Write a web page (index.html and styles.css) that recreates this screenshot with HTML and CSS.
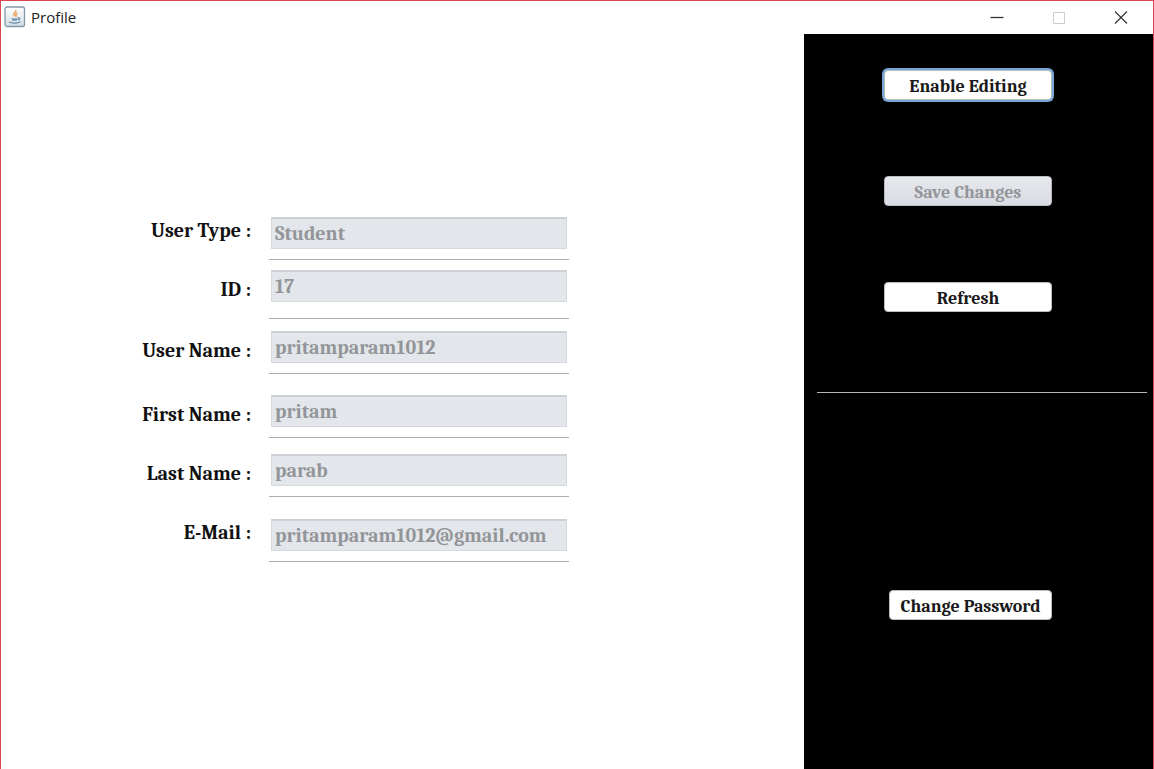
FILE: index.html
```html
<!DOCTYPE html>
<html lang="en">
<head>
<meta charset="utf-8">
<meta name="viewport" content="width=device-width, initial-scale=1">
<title>Profile</title>
<link rel="stylesheet" href="styles.css">
</head>
<body>
<div class="window">
  <header class="titlebar">
    <svg class="app-icon" viewBox="0 0 22 22" aria-hidden="true">
      <defs><linearGradient id="tile" x1="0" y1="0" x2="0" y2="1"><stop offset="0" stop-color="#fff"/><stop offset="1" stop-color="#d3dce2"/></linearGradient></defs>
      <rect x="1" y="1" width="19.500" height="19.500" rx="2" fill="url(#tile)" stroke="#8399a8" stroke-width="1.300"/>
      <path d="M11.800 4c1.200 2-2.800 3-1.800 4.800.3.700.9 1 1 1.700M13.500 6.800c-1.600.7-2.300 1.400-1.400 2.400.4.600.2 1-.3 1.400" fill="none" stroke="#e9984f" stroke-width="1.300"/>
      <path d="M7.500 11.800c1.500.8 4.500.8 6.300 0l-.8 2.600c-1.300.6-3.200.6-4.600 0z" fill="#6f95b0"/>
      <path d="M14 12c2.300-.5 2.100 1.500.1 2M5 16c3 1.500 8.500 1.500 11.500-.2" fill="none" stroke="#5d87a5" stroke-width="1.200"/>
    </svg>
    <h1 class="title">Profile</h1>
    <div class="controls">
      <button class="control" type="button" aria-label="Minimize"><svg viewBox="0 0 16 16"><path d="M1.500 8.500h13" stroke="#333" stroke-width="1.300"/></svg></button>
      <button class="control" type="button" aria-label="Maximize" disabled><svg viewBox="0 0 16 16"><path d="M2.500 3.500h11v11h-11z" fill="none" stroke="#ccc"/></svg></button>
      <button class="control" type="button" aria-label="Close"><svg viewBox="0 0 16 16"><path d="M2 2.500l12 12M14 2.500l-12 12" stroke="#333" stroke-width="1.200"/></svg></button>
    </div>
  </header>
  <main class="content">
    <form class="profile">
      <div class="row row-type"><label class="label label-high" for="type">User Type :</label><div class="field"><input class="input" id="type" value="Student" disabled></div></div>
      <div class="row row-id"><label class="label" for="uid">ID :</label><div class="field field-tall"><input class="input" id="uid" value="17" disabled></div></div>
      <div class="row row-user"><label class="label" for="user">User Name :</label><div class="field"><input class="input" id="user" value="pritamparam1012" disabled></div></div>
      <div class="row row-first"><label class="label" for="first">First Name :</label><div class="field"><input class="input" id="first" value="pritam" disabled></div></div>
      <div class="row row-last"><label class="label" for="last">Last Name :</label><div class="field"><input class="input" id="last" value="parab" disabled></div></div>
      <div class="row row-mail"><label class="label label-high" for="mail">E-Mail :</label><div class="field"><input class="input" id="mail" value="pritamparam1012@gmail.com" disabled></div></div>
    </form>
    <aside class="actions">
      <div class="group">
        <button class="button button-focus" type="button">Enable Editing</button>
        <button class="button" type="button" disabled>Save Changes</button>
        <button class="button" type="button">Refresh</button>
      </div>
      <hr class="divider">
      <div class="group group-password">
        <button class="button button-password" type="button">Change Password</button>
      </div>
    </aside>
  </main>
</div>
</body>
</html>
```
FILE: styles.css
```css
* { box-sizing: border-box; }
body {
  margin: 0;
  background: #fff;
  color: #111;
  font-family: Cambria, "DejaVu Serif Condensed", "DejaVu Serif", serif;
}
.window {
  display: flex;
  flex-direction: column;
  min-height: 100vh;
  border: 1px solid #dc4650;
  border-bottom: 0;
}
.titlebar {
  display: flex;
  align-items: center;
  height: 33px;
  padding: 0 1px 2px 3px;
}
.app-icon { width: 22px; height: 22px; }
.title {
  margin: 0 0 0 5px;
  font: 400 15px/20px "Segoe UI", "Open Sans", sans-serif;
  color: #222;
}
.controls { display: flex; margin-left: auto; }
.control {
  display: grid;
  place-items: center;
  width: 62px;
  height: 31px;
  padding: 0;
  border: 0;
  background: none;
}
.control svg { width: 16px; height: 16px; }
.content {
  display: grid;
  grid-template-columns: 69.7% 1fr;
  flex: 1;
}
.profile { padding: 173px 16px 24px; }
.row {
  display: grid;
  grid-template-columns: 234px minmax(0, 300px);
  column-gap: 18px;
}
.row-type, .row-id { padding-top: 10px; }
.row-user { padding-top: 12px; }
.row-first { padding-top: 21px; }
.row-last { padding-top: 16px; }
.row-mail { padding-top: 22px; }
.label {
  padding-top: 8px;
  text-align: right;
  font-size: 20px;
  font-weight: 700;
  line-height: 24px;
}
.label-high { padding-top: 2px; }
.field {
  padding: 0 2px 10px;
  border-bottom: 1px solid #a9adb6;
}
.field-tall { padding-bottom: 16px; }
.input {
  display: block;
  width: 100%;
  height: 32px;
  padding: 0 3px;
  border: 1px solid #d5d9dd;
  border-top: 2px solid #cdd0d5;
  border-radius: 0;
  background: #e3e7eb;
  color: #939599;
  font: inherit;
  font-size: 20px;
  font-weight: 700;
}
.actions { background: #000; }
.group {
  display: flex;
  flex-direction: column;
  align-items: flex-end;
  gap: 76px;
  padding: 36px 101px 80px 0;
}
.group-password { padding-top: 197px; }
.button {
  width: 168px;
  height: 30px;
  padding: 2px 0 0;
  border: 1px solid #b9bdc2;
  border-radius: 4px;
  background: #fff;
  color: #181818;
  font: inherit;
  font-size: 18px;
  font-weight: 700;
}
.button:disabled {
  background: linear-gradient(#e6e8ec, #d9dce3);
  color: #939599;
}
.button-focus { box-shadow: 0 0 0 2px #75a5d4; }
.button-password { width: 163px; }
.divider {
  height: 1px;
  margin: 0 6px 0 13px;
  border: 0;
  background: #b4b6be;
}
```
